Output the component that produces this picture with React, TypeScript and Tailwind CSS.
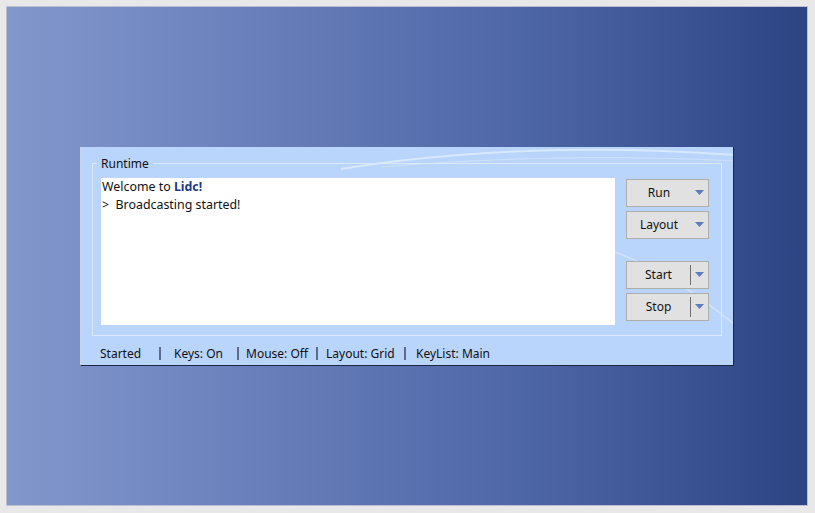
const Arrow = () => (
  <svg width="9" height="5" viewBox="0 0 9 5" className="shrink-0">
    <path d="M0 0 H9 L4.5 5 Z" fill="#5a7dbd" />
  </svg>
);

const MenuButton = ({ label, split = false }: { label: string; split?: boolean }) => (
  <div className="flex h-[28px] w-[83px] items-center border border-[#adadad] bg-[#e1e1e1] text-[#111]">
    <span className="flex-1 text-center">{label}</span>
    {split && <div className="h-[20px] w-px bg-[#707070]" />}
    <div className="flex w-[17px] justify-center">
      <Arrow />
    </div>
  </div>
);

const Sep = () => <div className="h-[13px] w-[2px] bg-[#5b6c8a]" />;

const App = () => {
  return (
    <div
      className="flex h-[513px] w-[815px] bg-[#e9e8e8] pb-[7px] pl-[6px] pr-[7px] pt-[6px] text-[12px] leading-4"
      style={{ fontFamily: '"Noto Sans", "Open Sans", sans-serif' }}
    >
      <div className="flex flex-1 items-center justify-center border border-[#b8bfd2] bg-[linear-gradient(to_right,#8298cc,#6a80bc_30%,#4d66a6_65%,#2d4483)]">
        <div className="relative flex h-[219px] w-[654px] flex-col overflow-hidden border-b border-l border-r border-b-[#1b2640] border-l-[#c9d3e4] border-r-[#1b2640] bg-[#b9d5fb] pl-[11px] pr-[12px] pt-[9px]">
          <svg className="pointer-events-none absolute inset-0" width="654" height="219">
            <path d="M260 22 C380 2 520 -2 654 8" stroke="#ffffff" strokeOpacity="0.45" strokeWidth="2" fill="none" />
            <path d="M300 20 C420 10 540 8 654 14" stroke="#ffffff" strokeOpacity="0.3" strokeWidth="1" fill="none" />
            <path d="M520 100 C580 120 620 150 654 178" stroke="#ffffff" strokeOpacity="0.35" strokeWidth="1.5" fill="none" />
          </svg>
          <fieldset className="relative h-[180px] w-[630px] border border-[#dbe8fa] pb-[9px] pl-[8px] pr-[11px] pt-[6px]">
            <legend className="-ml-[4px] px-[4px] text-[#111]">Runtime</legend>
            <div className="flex gap-[11px]">
              <div className="h-[147px] w-[514px] bg-white px-[1px] pt-[1px] text-[12.4px] text-[#111]">
                <div>
                  Welcome to <span className="font-bold text-[#1f3a85]">Lidc!</span>
                </div>
                <div className="mt-[2px]">&gt;&nbsp; Broadcasting started!</div>
              </div>
              <div className="flex flex-col pt-[1px]">
                <MenuButton label="Run" />
                <div className="mt-[4px]">
                  <MenuButton label="Layout" />
                </div>
                <div className="mt-[22px]">
                  <MenuButton label="Start" split />
                </div>
                <div className="mt-[4px]">
                  <MenuButton label="Stop" split />
                </div>
              </div>
            </div>
          </fieldset>
          <div className="relative mt-[10px] flex items-center text-[#111]">
            <span className="ml-[8px] w-[59px]">Started</span>
            <Sep />
            <span className="ml-[13px] w-[63px]">Keys: On</span>
            <Sep />
            <span className="ml-[7px] w-[70px]">Mouse: Off</span>
            <Sep />
            <span className="ml-[8px] w-[78px]">Layout: Grid</span>
            <Sep />
            <span className="ml-[10px]">KeyList: Main</span>
          </div>
        </div>
      </div>
    </div>
  );
};

export default App;
